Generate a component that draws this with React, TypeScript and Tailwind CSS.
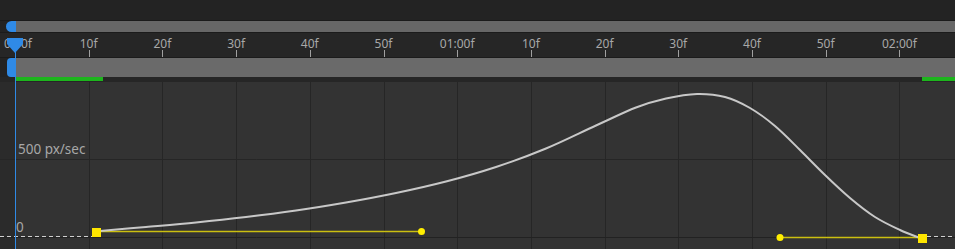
const TICK0 = 15;
const STEP = 73.7;
const GRAPH_TOP = 82;

const labels = ["0:00f", "10f", "20f", "30f", "40f", "50f", "01:00f", "10f", "20f", "30f", "40f", "50f", "02:00f"];

// speed graph sample points (page coords), smoothed with catmull-rom
const pts: [number, number][] = [
  [100, 231],
  [146, 227],
  [196, 222.5],
  [246, 217],
  [296, 210.5],
  [346, 202.5],
  [396, 193],
  [446, 181.5],
  [496, 167],
  [546, 148.5],
  [596, 125.5],
  [636, 107.5],
  [666, 98.5],
  [697, 94],
  [725, 97],
  [750, 108],
  [775, 126],
  [800, 150],
  [825, 175],
  [850, 198],
  [875, 217],
  [900, 230],
  [920, 238],
];

function curvePath(points: [number, number][]) {
  const p = points.map(([x, y]) => [x, y - GRAPH_TOP]);
  let d = `M${p[0][0]} ${p[0][1]}`;
  for (let i = 0; i < p.length - 1; i++) {
    const p0 = p[i - 1] || p[i];
    const p1 = p[i];
    const p2 = p[i + 1];
    const p3 = p[i + 2] || p2;
    const c1x = p1[0] + (p2[0] - p0[0]) / 6;
    const c1y = p1[1] + (p2[1] - p0[1]) / 6;
    const c2x = p2[0] - (p3[0] - p1[0]) / 6;
    const c2y = p2[1] - (p3[1] - p1[1]) / 6;
    d += ` C${c1x.toFixed(1)} ${c1y.toFixed(1)} ${c2x.toFixed(1)} ${c2y.toFixed(1)} ${p2[0]} ${p2[1]}`;
  }
  return d;
}

function Ruler() {
  return (
    <div className="relative h-[24px] bg-[#262626]">
      {labels.map((l, i) => {
        const x = TICK0 + i * STEP;
        return (
          <div key={i}>
            <span
              className="absolute top-[3px] text-[12px] leading-[16px] text-[#a8a8a8] whitespace-nowrap"
              style={i === 0 ? { left: 4 } : { left: x, transform: "translateX(-50%)" }}
            >
              {l}
            </span>
            <div className="absolute top-[17px] h-[7px] w-px bg-[#a0a0a0]" style={{ left: Math.round(x) }} />
          </div>
        );
      })}
    </div>
  );
}

function Graph() {
  const h = 167;
  const zero = 237 - GRAPH_TOP;
  return (
    <div className="relative h-[167px] bg-[#333333]">
      <svg width={955} height={h} className="absolute inset-0">
        <rect x={0} y={0} width={15} height={h} fill="#2b2b2b" />
        {labels.slice(1).map((_, i) => {
          const x = Math.round(TICK0 + (i + 1) * STEP) + 0.5;
          return <line key={i} x1={x} y1={0} x2={x} y2={h} stroke="#262626" strokeWidth={1} />;
        })}
        <line x1={0} y1={77.5} x2={955} y2={77.5} stroke="#262626" strokeWidth={1} />
        <line x1={0} y1={zero + 0.5} x2={955} y2={zero + 0.5} stroke="#222222" strokeWidth={1} />
        <line x1={0} y1={zero - 0.5} x2={92} y2={zero - 0.5} stroke="#d0d0d0" strokeWidth={1} strokeDasharray="4 3" />
        <line x1={927} y1={zero - 0.5} x2={955} y2={zero - 0.5} stroke="#d0d0d0" strokeWidth={1} strokeDasharray="4 3" />
        {/* bezier handles */}
        <line x1={96} y1={231.5 - GRAPH_TOP} x2={421} y2={231.5 - GRAPH_TOP} stroke="#cbbf10" strokeWidth={1.3} />
        <circle cx={421.5} cy={231.5 - GRAPH_TOP} r={3.5} fill="#ffee00" />
        <line x1={780} y1={237.5 - GRAPH_TOP} x2={922} y2={237.5 - GRAPH_TOP} stroke="#cbbf10" strokeWidth={1.3} />
        <circle cx={780} cy={237.5 - GRAPH_TOP} r={3.5} fill="#ffee00" />
        <path d={curvePath(pts)} fill="none" stroke="#c8c8c8" strokeWidth={2} />
        <rect x={92} y={228 - GRAPH_TOP} width={9} height={9} fill="#ffe600" />
        <rect x={918} y={234 - GRAPH_TOP} width={9} height={9} fill="#ffe600" />
      </svg>
      <span className="absolute left-[18px] top-[59px] text-[13.5px] leading-[17px] text-[#a8a8a8]">500 px/sec</span>
      <span className="absolute left-[16px] top-[137px] text-[13.5px] leading-[17px] text-[#a8a8a8]">0</span>
    </div>
  );
}

export default function App() {
  return (
    <div
      className="relative w-[955px] h-[249px] overflow-hidden bg-[#232323]"
      style={{ fontFamily: '"Noto Sans", "Open Sans", sans-serif' }}
    >
      {/* header */}
      <div className="h-[20px] bg-[#232323]" />

      {/* navigator */}
      <div className="flex h-[13px] border-y border-[#1b1b1b] bg-[#232323]">
        <div className="w-[6px]" />
        <div className="w-[10px] rounded-l-full bg-[#2f8ae6]" />
        <div className="flex-1 bg-[#676767]" />
      </div>

      <Ruler />

      {/* work area */}
      <div className="flex h-[20px] border-t border-[#1b1b1b] bg-[#232323]">
        <div className="w-[7px]" />
        <div className="w-[8px] rounded-l-[4px] bg-[#2f8ae6]" />
        <div className="flex-1 bg-[#6a6a6a]" />
      </div>

      {/* cached frames */}
      <div className="flex h-[5px] bg-[#262626]">
        <div className="ml-[15px] h-[4px] w-[88px] bg-[#1db51d]" />
        <div className="flex-1" />
        <div className="h-[4px] w-[33px] bg-[#1db51d]" />
      </div>

      <Graph />

      {/* playhead */}
      <div className="absolute left-[15px] top-[40px] bottom-0 w-px bg-[#2f8ae6]" />
      <svg className="absolute left-0 top-0" width={30} height={60}>
        <polygon points="7,38 23,38 23,44 15,53 7,44" fill="#2f8ae6" />
      </svg>
    </div>
  );
}
